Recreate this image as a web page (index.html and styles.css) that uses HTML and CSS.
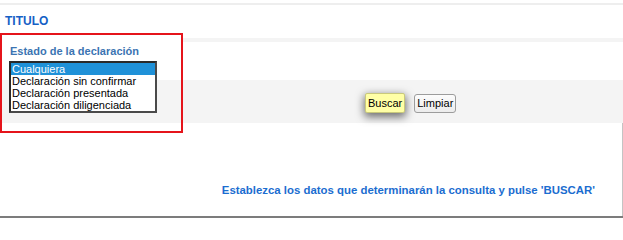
FILE: index.html
```html
<!DOCTYPE html>
<html lang="es">
<head>
<meta charset="utf-8">
<title>Consulta</title>
<link rel="stylesheet" href="styles.css">
</head>
<body>
<div class="page">
  <div class="topline"></div>
  <h1 class="title">TITULO</h1>
  <form class="form" onsubmit="return false">
    <div class="stripe"></div>
    <div class="field">
      <label class="label">Estado de la declaración</label>
      <div class="listbox" role="listbox">
        <div class="opt sel" role="option">Cualquiera</div>
        <div class="opt" role="option">Declaración sin confirmar</div>
        <div class="opt" role="option">Declaración presentada</div>
        <div class="opt" role="option">Declaración diligenciada</div>
      </div>
    </div>
    <div class="actions">
      <button type="button" class="btn btn-primary">Buscar</button>
      <button type="button" class="btn btn-secondary">Limpiar</button>
    </div>
  </form>
  <p class="msg">Establezca los datos que determinarán la consulta y pulse 'BUSCAR'</p>
  <div class="highlight"></div>
</div>
</body>
</html>
```

FILE: styles.css
```css
html, body {
  margin: 0;
  padding: 0;
  background: #ffffff;
}

body {
  font-family: "Liberation Sans", Arial, sans-serif;
}

.page {
  position: relative;
  width: 623px;
  height: 218px;
  box-sizing: border-box;
  border-bottom: 2px solid #7c7c7c;
  overflow: hidden;
}

.topline {
  margin-top: 3px;
  height: 2px;
  background: #eeeeee;
}

.title {
  margin: 0;
  box-sizing: border-box;
  height: 33px;
  padding: 9px 0 0 5px;
  font-size: 12px;
  line-height: 14px;
  font-weight: bold;
  color: #1660c6;
}

.form {
  display: grid;
  grid-template-columns: 183px 1fr;
  grid-template-rows: 4px 38px 43px;
}

.stripe {
  grid-column: 2;
  grid-row: 1;
  background: #f4f4f4;
}

.field {
  grid-column: 1;
  grid-row: 2 / 4;
  padding: 3px 0 0 10px;
  background: linear-gradient(#ffffff 0 38px, #f4f4f4 38px);
}

.label {
  display: block;
  font-size: 11px;
  line-height: 13px;
  font-weight: bold;
  color: #3b74b2;
}

.listbox {
  margin: 3px 0 0 -1px;
  width: 148px;
  height: 52px;
  box-sizing: border-box;
  border: 2px solid;
  border-color: #2a2a2a #4a4a4a #4a4a4a #2a2a2a;
  background: #ffffff;
  font-size: 11px;
  line-height: 12px;
  color: #000000;
}

.opt {
  padding-left: 1px;
  height: 12px;
  white-space: nowrap;
}

.opt.sel {
  background: #1f91d8;
  color: #ffffff;
}

.actions {
  grid-column: 2;
  grid-row: 3;
  display: flex;
  align-items: flex-start;
  gap: 9px;
  padding: 13px 0 0 182px;
  background: #f4f4f4;
}

.btn {
  margin: 0;
  font-family: "Liberation Sans", Arial, sans-serif;
  font-size: 11px;
  line-height: 14px;
  color: #000000;
  padding: 2px 2px;
  cursor: pointer;
}

.btn-primary {
  background: #ffffa6;
  border: 1px solid #c9c97c;
  border-radius: 2px;
  box-shadow: 0 3px 8px 1px rgba(0, 0, 0, 0.55);
}

.btn-secondary {
  margin-top: 1px;
  padding: 1px 2px 2px;
  background: linear-gradient(#fcfcfc, #ececec);
  border: 1px solid #9c9c9c;
  border-radius: 3px;
}

.msg {
  margin: 0;
  box-sizing: border-box;
  height: 93px;
  padding: 61px 27px 0 0;
  border-right: 1px solid #c4c4c4;
  text-align: right;
  font-size: 11.4px;
  line-height: 13px;
  font-weight: bold;
  color: #1b6dd0;
}

.highlight {
  position: absolute;
  left: 0;
  top: 33px;
  width: 183px;
  height: 100px;
  box-sizing: border-box;
  border: 2px solid #e5141b;
  pointer-events: none;
}
```
